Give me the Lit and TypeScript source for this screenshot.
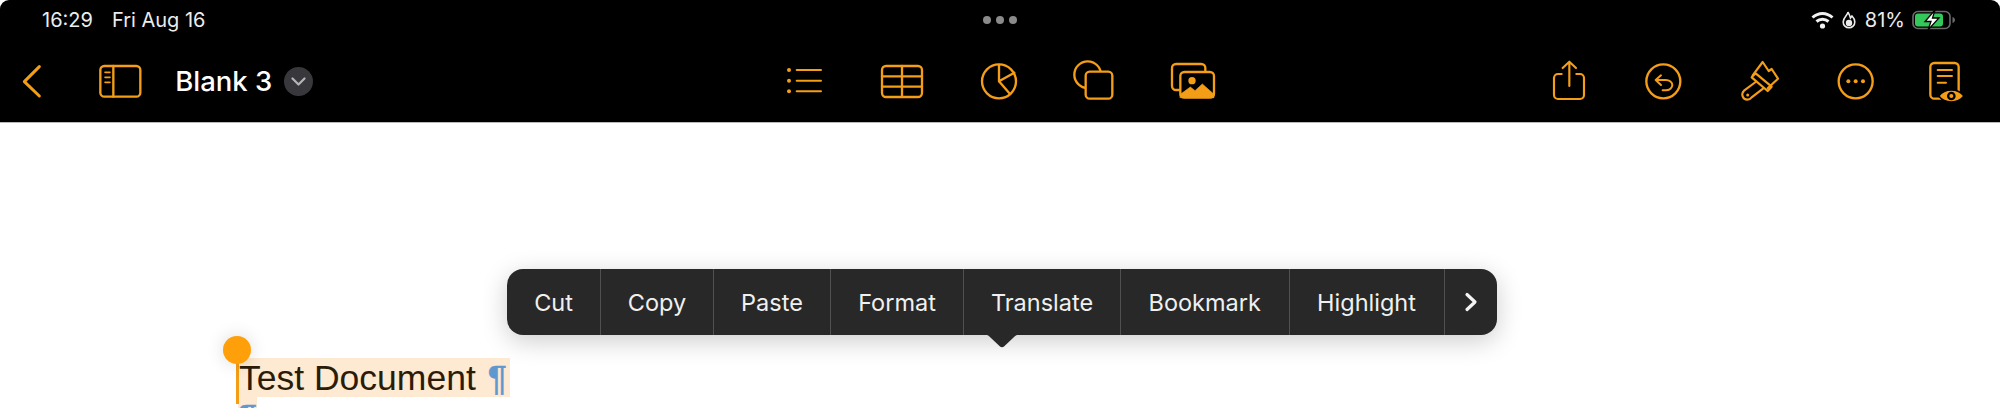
import { LitElement, html, css, svg } from "lit";
import { customElement } from "lit/decorators.js";

const icon = (x0: number, x1: number, body: unknown, cls = "") => html`<svg
  class="ic ${cls}"
  width=${(x1 - x0) / 3}
  height="42"
  viewBox="${x0} 180 ${x1 - x0} 126"
  fill="none"
  stroke="#f49d16"
  stroke-width="7"
  stroke-linecap="round"
  stroke-linejoin="round"
>${body}</svg>`;

const items = [
  ["Cut", 94],
  ["Copy", 113],
  ["Paste", 117],
  ["Format", 133],
  ["Translate", 157],
  ["Bookmark", 168.5],
  ["Highlight", 155],
] as const;

@customElement("app-root")
export class AppRoot extends LitElement {
  static styles = css`
    :host { display: block; width: 2000px; height: 408px; overflow: hidden; background: #fff; position: relative; font-family: Inter, "Liberation Sans", sans-serif; }
    .top { background: #000; height: 122px; border-radius: 9px 9px 0 0; box-shadow: 0 1px 0 #b9b9b9; display: flex; flex-direction: column; }
    .status { height: 40px; display: flex; align-items: center; color: #ececec; font-size: 20px; position: relative; padding-left: 42px; padding-right: 43px; }
    .date { margin-left: 19px; }
    .dots { position: absolute; left: 983px; top: 16px; display: flex; gap: 5.2px; }
    .dots i { width: 8px; height: 8px; border-radius: 50%; background: #8a8a8a; }
    .right { margin-left: auto; display: flex; align-items: center; }
    .wifi { margin-right: 8px; }
    .flame { margin-right: 9px; }
    .batt { margin-left: 7px; }
    .tools { flex: 1; display: flex; align-items: center; padding-left: 21.67px; }
    .ic { display: block; flex: none; }
    .side { margin-left: 57.67px; }
    .title { color: #fff; font-size: 27.5px; font-weight: 500; margin-left: 33.5px; width: 108.500px; white-space: nowrap; }
    .chev { width: 29px; height: 29px; border-radius: 50%; background: #38383c; display: flex; align-items: center; justify-content: center; }
    .g1 { margin-left: 472px; }
    .g2 { margin-left: 55.67px; }
    .g3 { margin-left: 55.33px; }
    .g4 { margin-left: 53.67px; }
    .g5 { margin-left: 56px; }
    .r1 { margin-left: 335.33px; }
    .r2, .r3 { margin-left: 58px; }
    .r4 { margin-left: 55.33px; }
    .r5 { margin-left: 53.33px; }
    .doc { font-family: "Liberation Sans", sans-serif; font-size: 35.5px; color: #2b1c08; margin-left: 238px; margin-top: 236px; line-height: 41px; }
    .line { background: #fee9d2; display: block; width: 272px; height: 39px; white-space: nowrap; padding-left: 1px; box-sizing: border-box; }
    .pil { color: #5f97cf; -webkit-text-stroke: 0.6px #5f97cf; }
    .first { margin-left: 2px; }
    .line2 { width: 19px; padding-left: 0; }
    .caret { position: absolute; left: 236px; top: 358px; width: 3px; height: 46px; background: #f49d16; }
    .knob { position: absolute; left: 223px; top: 336px; width: 28px; height: 28px; border-radius: 50%; background: #ff9f0a; box-shadow: 0 0 18px rgba(0,0,0,.14); }
    .menu { position: absolute; left: 507px; top: 269px; width: 990px; height: 66px; background: #282828; border-radius: 16px; display: flex; box-shadow: 0 6px 26px rgba(0,0,0,.2); color: #f0f0f0; font-size: 23.5px; }
    .cell { display: flex; align-items: center; justify-content: center; border-right: 1px solid #505050; box-sizing: border-box; flex: none; }
    .more { flex: 1; display: flex; align-items: center; justify-content: center; }
    .tip { position: absolute; left: 982px; top: 334px; }
  `;

  render() {
    return html`
      <div class="top">
        <div class="status">
          <span>16:29</span><span class="date">Fri Aug 16</span>
          <div class="dots"><i></i><i></i><i></i></div>
          <div class="right">
            <svg class="wifi" width="23" height="18" viewBox="0 0 23 18">
              <g fill="none" stroke="#f2f2f2" stroke-width="3">
                <path d="M1.500 6.500C7.500 1 15.500 1 21.500 6.500"/>
                <path d="M5.500 10.500C9 7.500 14 7.500 17.500 10.500"/>
              </g>
              <circle cx="11.500" cy="15" r="2.600" fill="#f2f2f2"/>
            </svg>
            <svg class="flame" width="14" height="18" viewBox="0 0 14 18" fill="none" stroke="#ececec" stroke-width="1.600">
              <path d="M6 1c0 3-4.800 5-4.800 10a5.800 5.800 0 0 0 11.600 0C12.800 8 11 6 10 5L8.500 7C8 5 7 3 6 1Z"/>
              <circle cx="7" cy="12" r="2.400" fill="#ececec"/>
            </svg>
            <span>81%</span>
            <svg class="batt" width="45" height="20" viewBox="0 0 45 20">
              <rect x="1" y="1.500" width="37" height="17" rx="5" fill="none" stroke="#6a6a6a" stroke-width="1.600"/>
              <rect x="3" y="3.500" width="28" height="13" rx="3" fill="#34c759"/>
              <path d="M40.500 7v6c1.600-.5 2.500-1.700 2.500-3s-.9-2.500-2.500-3Z" fill="#6a6a6a"/>
              <path d="M23 0 13 11.500h6L16 20l11-12h-6.500Z" fill="#fff" stroke="#000" stroke-width="1.300"/>
            </svg>
          </div>
        </div>
        <div class="tools">
          ${icon(65, 125, svg`<path d="M117 200 72 245l45 43" stroke-width="9"/>`)}
          ${icon(298, 425, svg`<rect x="302" y="198" width="120" height="92" rx="12"/><path d="M341 198v92"/><path d="M316 217h15M316 232h15M316 247h15" stroke-width="5"/>`, "side")}
          <div class="title">Blank 3</div>
          <div class="chev"><svg width="15" height="9" viewBox="0 0 15 9" fill="none" stroke="#b5b5b8" stroke-width="2.200" stroke-linecap="round" stroke-linejoin="round"><path d="M1.500 1.500 7.500 7.500l6-6"/></svg></div>
          ${icon(75, 195, svg`<g stroke-width="6"><path d="M110 210h73M110 242h73M110 274h73"/></g><g fill="#f49d16" stroke="none"><circle cx="87" cy="210" r="6"/><circle cx="87" cy="242" r="6"/><circle cx="87" cy="274" r="6"/></g>`, "g1")}
          ${icon(362, 494, svg`<rect x="368" y="198" width="120" height="93" rx="12"/><path d="M368 229h120M368 260h120M428 198v93"/>`, "g2")}
          ${icon(660, 775, svg`<circle cx="717" cy="244" r="51"/><path d="M717 195v49l33 38M717 244l46-26"/>`, "g3")}
          ${icon(936, 1064, svg`<circle cx="983" cy="224" r="40"/><rect x="977" y="215" width="80" height="81" rx="12" fill="#000"/>`, "g4")}
          ${icon(1232, 1370, svg`<rect x="1238" y="192" width="100" height="78" rx="12"/><rect x="1263" y="216" width="101" height="77" rx="12" fill="#000"/><path d="M1263 283l30-22 14 11 22-20 35 31v10h-101Z" fill="#f49d16" stroke="#f49d16" stroke-width="2"/><circle cx="1298" cy="242" r="11" fill="#f49d16" stroke="none"/>`, "g5")}
          ${icon(96, 198, svg`<path d="M125 222h-11a12 12 0 0 0-12 12v51a12 12 0 0 0 12 12h66a12 12 0 0 0 12-12v-51a12 12 0 0 0-12-12h-11" stroke-width="6.500"/><path d="M148 258v-72M128 204l20-19 20 19" stroke-width="6.500"/>`, "r1")}
          ${icon(372, 488, svg`<circle cx="430" cy="244" r="51"/><path d="M423 226l-16 14 16 15M407 240h30c12 0 20 7 20 15s-8 16-20 16h-9" stroke-width="6"/>`, "r2")}
          ${icon(662, 782, svg`<g stroke-width="6.500"><path d="M700 226 730 186 748 213 757 207 776 236 745 265"/><path d="M697 232 709 220 757 260 745 273Z"/><path d="M709 246 674 272C664 282 670 298 684 299 690 299 694 296 697 292L731 266"/></g><circle cx="685" cy="285" r="4.500" fill="#f49d16" stroke="none"/>`, "r3")}
          ${icon(948, 1066, svg`<circle cx="1007" cy="244" r="51"/><g fill="#f49d16" stroke="none"><circle cx="985" cy="244" r="6"/><circle cx="1007" cy="244" r="6"/><circle cx="1029" cy="244" r="6"/></g>`, "r4")}
          ${icon(1226, 1336, svg`<rect x="1233" y="189" width="85" height="107" rx="12"/><path d="M1255 210h43M1255 228h43M1255 248h25" stroke-width="6"/><path d="M1258 288c18-24 58-24 76 0-18 24-58 24-76 0Z" fill="#f49d16" stroke="#000" stroke-width="5"/><circle cx="1296" cy="288" r="13" fill="#000" stroke="none"/><circle cx="1296" cy="288" r="6" fill="#f49d16" stroke="none"/>`, "r5")}
        </div>
      </div>
      <div class="doc">
        <span class="line">Test Document <span class="pil first">¶</span></span>
        <span class="line line2 pil">¶</span>
      </div>
      <div class="caret"></div>
      <div class="knob"></div>
      <div class="menu">
        ${items.map(([t, w]) => html`<div class="cell" style="width:${w}px">${t}</div>`)}
        <div class="more"><svg width="14" height="20" viewBox="0 0 14 20" fill="none" stroke="#f4f4f4" stroke-width="3.200" stroke-linecap="round" stroke-linejoin="round"><path d="M3 2.500 11 10l-8 7.500"/></svg></div>
      </div>
      <svg class="tip" width="40" height="14" viewBox="0 0 40 14"><path d="M0 0h40c-5 0-7 2-9 4l-9 8.500c-1 1-3 1-4 0L9 4C7 2 5 0 0 0Z" fill="#282828"/></svg>
    `;
  }
}
